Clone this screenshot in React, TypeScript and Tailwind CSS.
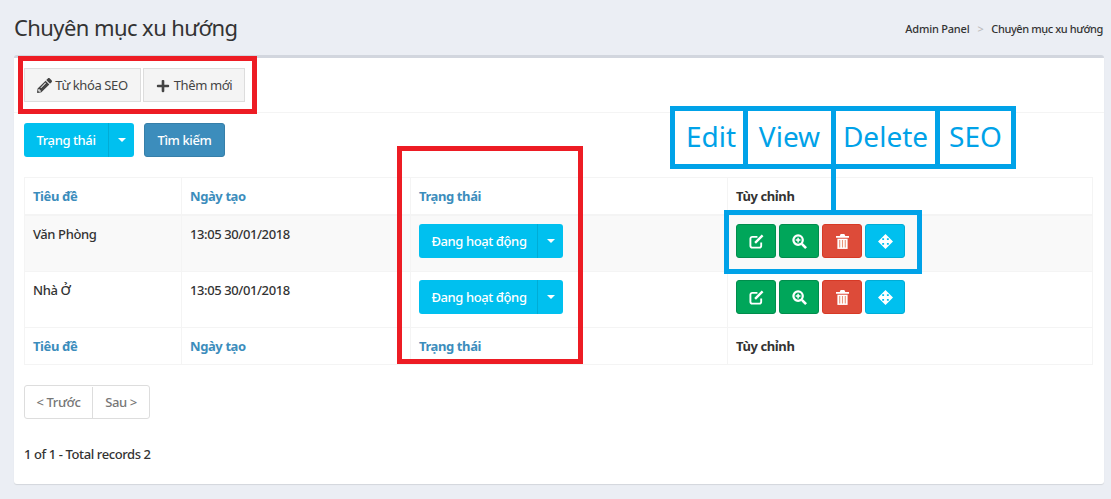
import { FaPencilAlt, FaPlus } from "react-icons/fa";

const rows = [
  { title: "Văn Phòng", date: "13:05 30/01/2018", shaded: true },
  { title: "Nhà Ở", date: "13:05 30/01/2018", shaded: false },
];

const Caret = () => (
  <span className="h-0 w-0 border-x-[4px] border-t-[4px] border-x-transparent border-t-white" />
);

const EditIcon = () => (
  <svg viewBox="0 0 16 16" className="h-[15px] w-[15px]" fill="none" stroke="currentColor">
    <path d="M13 9v3.5a2 2 0 0 1-2 2H3.5a2 2 0 0 1-2-2V5a2 2 0 0 1 2-2H9" strokeWidth="2" />
    <path d="M6.5 9.5L14.5 1.5" strokeWidth="2.6" />
  </svg>
);

const ZoomIcon = () => (
  <svg viewBox="0 0 16 16" className="h-[15px] w-[15px]" fill="none" stroke="currentColor">
    <circle cx="6.5" cy="6.5" r="5" strokeWidth="2.4" />
    <path d="M10.5 10.5L15 15" strokeWidth="2.8" />
    <path d="M4 6.5h5M6.5 4v5" strokeWidth="1.6" />
  </svg>
);

const TrashIcon = () => (
  <svg viewBox="0 0 14 16" className="h-[15px] w-[13px]" fill="currentColor">
    <path d="M5 0h4l1 2h4v2H0V2h4z" />
    <path d="M1.5 5h11v11h-11z" />
    <path d="M4 6.5v8M7 6.5v8M10 6.5v8" stroke="#e9967a" strokeWidth="1.2" />
  </svg>
);

const MoveIcon = () => (
  <svg viewBox="0 0 16 16" className="h-[15px] w-[15px]" fill="currentColor">
    <path
      fillRule="evenodd"
      d="M8 0l8 8-8 8-8-8zM4.5 4.5h2v2h-2zM9.5 4.5h2v2h-2zM4.5 9.5h2v2h-2zM9.5 9.5h2v2h-2z"
    />
  </svg>
);

const SplitButton = ({ label, labelWidth }: { label: string; labelWidth: string }) => (
  <div className="flex h-[34px] rounded-[3px] bg-[#00c0ef] text-[13px] font-medium text-white">
    <span className={`flex items-center justify-center border-r border-[#00acd6] pt-[1px] ${labelWidth}`}>{label}</span>
    <span className="flex w-[25px] items-center justify-center"><Caret /></span>
  </div>
);

const ActionButton = ({ color, children }: { color: string; children: React.ReactNode }) => (
  <span className={`flex h-[34px] w-[40px] items-center justify-center rounded-[3px] border text-white ${color}`}>
    {children}
  </span>
);

const HeaderCells = () => (
  <>
    <div className="w-[156px] px-[8px] pt-[9px] font-bold text-[#3c8dbc]">Tiêu đề</div>
    <div className="w-[229px] border-l border-[#f4f4f4] px-[8px] pt-[9px] font-bold text-[#3c8dbc]">Ngày tạo</div>
    <div className="w-[317px] border-l border-[#f4f4f4] px-[8px] pt-[9px] font-bold text-[#3c8dbc]">Trạng thái</div>
    <div className="flex-1 border-l border-[#f4f4f4] px-[8px] pt-[9px] font-bold text-[#333]">Tùy chỉnh</div>
  </>
);

export default function App() {
  return (
    <div className="relative h-[499px] w-[1111px] overflow-hidden bg-[#ebeef4] font-['Noto_Sans',sans-serif] text-[13px] tracking-[-0.4px] text-[#333]">
      <div className="flex h-[55px] items-center justify-between pl-[14px] pr-[8px]">
        <h1 className="text-[22px] tracking-[-0.58px] text-[#333]">Chuyên mục xu hướng</h1>
        <div className="flex gap-[8px] pt-[4px] text-[11px] font-medium">
          <span className="tracking-[-0.2px]">Admin Panel</span>
          <span className="text-[#bbb]">&gt;</span>
          <span>Chuyên mục xu hướng</span>
        </div>
      </div>

      <div className="ml-[14px] h-[429px] w-[1090px] rounded-[3px] border-t-[3px] border-[#d2d6de] bg-white shadow-[0_1px_1px_rgba(0,0,0,0.1)]">
        <div className="flex h-[55px] gap-[2px] border-b border-[#f4f4f4] pl-[10px] pt-[10px]">
          <span className="flex h-[34px] w-[117px] items-center justify-center gap-[3px] border border-[#ddd] bg-[#f4f4f4] pt-[1px] text-[#444]">
            <FaPencilAlt className="text-[15px]" /> Từ khóa SEO
          </span>
          <span className="flex h-[34px] w-[102px] items-center justify-center gap-[4px] border border-[#ddd] bg-[#f4f4f4] pt-[1px] text-[#444]">
            <FaPlus className="text-[14px]" /> Thêm mới
          </span>
        </div>

        <div className="flex gap-[10px] pl-[10px] pt-[10px]">
          <SplitButton label="Trạng thái" labelWidth="w-[85px]" />
          <span className="flex h-[34px] w-[81px] items-center justify-center rounded-[3px] border border-[#367fa9] bg-[#3c8dbc] pt-[1px] font-medium text-white">Tìm kiếm</span>
        </div>

        <div className="ml-[10px] mt-[20px] w-[1069px] border border-[#f4f4f4]">
          <div className="flex h-[38px] border-b-2 border-[#f4f4f4]"><HeaderCells /></div>
          {rows.map((row) => (
            <div key={row.title} className={`flex h-[56px] border-b border-[#f4f4f4] ${row.shaded ? "bg-[#f9f9f9]" : ""}`}>
              <div className="w-[156px] px-[8px] pt-[9px] font-medium">{row.title}</div>
              <div className="w-[229px] border-l border-[#f4f4f4] px-[8px] pt-[9px] font-medium">{row.date}</div>
              <div className="w-[317px] border-l border-[#f4f4f4] px-[8px] pt-[8px]">
                <div className="w-[144px]"><SplitButton label="Đang hoạt động" labelWidth="w-[119px] pl-[2px]" /></div>
              </div>
              <div className="flex flex-1 gap-[3px] border-l border-[#f4f4f4] px-[8px] pt-[8px]">
                <ActionButton color="border-[#008d4c] bg-[#00a65a]"><EditIcon /></ActionButton>
                <ActionButton color="border-[#008d4c] bg-[#00a65a]"><ZoomIcon /></ActionButton>
                <ActionButton color="border-[#d73925] bg-[#dd4b39]"><TrashIcon /></ActionButton>
                <ActionButton color="border-[#00acd6] bg-[#00c0ef]"><MoveIcon /></ActionButton>
              </div>
            </div>
          ))}
          <div className="flex h-[36px]"><HeaderCells /></div>
        </div>

        <div className="ml-[10px] mt-[20px] flex h-[34px] w-[126px] rounded-[3px] border border-[#ddd] pt-[1px] font-medium text-[#777]">
          <span className="flex w-[68px] items-center justify-center border-r border-[#ddd]">&lt; Trước</span>
          <span className="flex flex-1 items-center justify-center">Sau &gt;</span>
        </div>
        <p className="ml-[10px] mt-[26px] font-medium">1 of 1 - Total records 2</p>
      </div>

      {/* annotations drawn on top of the screenshot */}
      <div className="absolute left-[18px] top-[56px] h-[58px] w-[239px] border-[5px] border-[#ed1c24]" />
      <div className="absolute left-[397px] top-[146px] h-[218px] w-[186px] border-[5px] border-[#ed1c24]" />

      <div className="absolute left-[670px] top-[106px] flex h-[63px] w-[346px] border-[5px] border-[#00a2e8] bg-white pb-[3px] text-[28px] tracking-normal text-[#00a2e8]">
        <span className="flex w-[68px] items-center justify-center pl-[4px]">Edit</span>
        <span className="-mb-[3px] flex w-[88px] items-center justify-center border-l-[5px] border-[#00a2e8] pb-[3px]">View</span>
        <span className="-mb-[3px] flex w-[104px] items-center justify-center border-l-[5px] border-[#00a2e8] pb-[3px]">Delete</span>
        <span className="-mb-[3px] flex flex-1 items-center justify-center border-l-[5px] border-[#00a2e8] pb-[3px]">SEO</span>
      </div>
      <div className="absolute left-[831px] top-[169px] h-[42px] w-[5px] bg-[#00a2e8]" />
      <div className="absolute left-[724px] top-[210px] h-[64px] w-[198px] border-[5px] border-[#00a2e8]" />
    </div>
  );
}
